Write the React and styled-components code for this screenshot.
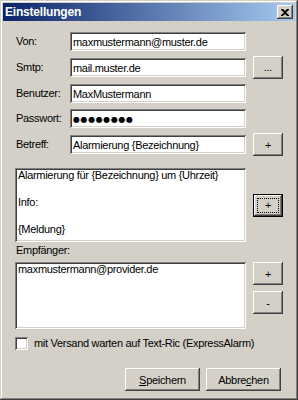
import React from "react";
import styled, { createGlobalStyle, css } from "styled-components";

const GlobalStyle = createGlobalStyle`
  html, body {
    margin: 0;
    padding: 0;
    background: #d4d0c8;
  }
  body {
    font-family: "Liberation Sans", Arial, sans-serif;
    font-size: 11px;
    letter-spacing: -0.3px;
    color: #000;
  }
  * { box-sizing: border-box; }
`;

// win2k bevels
const raised = css`
  box-shadow: inset -1px -1px #404040, inset 1px 1px #ffffff,
    inset -2px -2px #808080, inset 2px 2px #d4d0c8;
`;
const sunken = css`
  box-shadow: inset 1px 1px #808080, inset -1px -1px #ffffff,
    inset 2px 2px #404040, inset -2px -2px #d4d0c8;
`;

const Window = styled.div`
  width: 298px;
  height: 400px;
  padding: 3px;
  background: #d4d0c8;
  display: flex;
  flex-direction: column;
  box-shadow: inset -1px -1px #404040, inset 1px 1px #d4d0c8,
    inset -2px -2px #808080, inset 2px 2px #ffffff;
`;

const TitleBar = styled.div`
  height: 18px;
  display: flex;
  align-items: center;
  justify-content: space-between;
  padding: 0 2px 0 2px;
  background: linear-gradient(to right, #0a246a, #a6caf0);
`;

const Title = styled.span`
  color: #fff;
  font-weight: bold;
  font-size: 12px;
  letter-spacing: -0.2px;
`;

const CloseButton = styled.button`
  width: 16px;
  height: 14px;
  padding: 0;
  border: 0;
  background: #d4d0c8;
  display: flex;
  align-items: center;
  justify-content: center;
  ${raised}
`;

const Body = styled.div`
  padding: 11px 12px 0 12px;
  display: flex;
  flex-direction: column;
`;

const Form = styled.div`
  display: grid;
  grid-template-columns: 55px 176px 37px;
  grid-auto-rows: 19px;
  row-gap: 6.75px;
  align-items: center;
`;

const Label = styled.label`
  padding-left: 1px;
  line-height: 13px;
`;

const Field = styled.input`
  width: 176px;
  height: 19px;
  border: 0;
  outline: none;
  padding: 1px 3px 0 3px;
  background: #fff;
  font: inherit;
  letter-spacing: inherit;
  color: #000;
  ${sunken}
`;

const PasswordField = styled(Field)`
  font-family: "DejaVu Sans", sans-serif;
  font-size: 8px;
  letter-spacing: 0.6px;
  padding-left: 3px;
`;

const Button = styled.button`
  width: ${(p) => p.$w || 30}px;
  height: 23px;
  padding: 0;
  border: 0;
  outline: none;
  background: #d4d0c8;
  font: inherit;
  letter-spacing: inherit;
  color: #000;
  justify-self: end;
  align-self: center;
  position: relative;
  ${raised}
  ${(p) =>
    p.$focused &&
    css`
      box-shadow: inset 0 0 0 1px #000, inset -2px -2px #404040,
        inset 2px 2px #ffffff, inset -3px -3px #808080;
      &::after {
        content: "";
        position: absolute;
        inset: 4px;
        border: 1px dotted #000;
      }
    `}
`;

const AreaRow = styled.div`
  display: flex;
  gap: 7px;
  align-items: flex-start;
  margin-top: ${(p) => p.$top || 0}px;
`;

const Area = styled.textarea`
  width: 231px;
  height: ${(p) => p.$h}px;
  border: 0;
  outline: none;
  resize: none;
  overflow: hidden;
  padding: 1px 3px 0 3px;
  background: #fff;
  font: inherit;
  letter-spacing: inherit;
  line-height: 13.5px;
  color: #000;
  ${sunken}
`;

const SideButtons = styled.div`
  display: flex;
  flex-direction: column;
  gap: 6px;
`;

const GroupLabel = styled.div`
  margin: 2px 0 5px 1px;
  line-height: 13px;
`;

const CheckRow = styled.label`
  display: flex;
  align-items: center;
  gap: 6px;
  margin-top: 8px;
  line-height: 13px;
`;

const CheckBox = styled.span`
  width: 13px;
  height: 13px;
  background: #fff;
  ${sunken}
`;

const Footer = styled.div`
  display: flex;
  justify-content: flex-end;
  gap: 6px;
  margin-top: 18px;
  padding-right: 2px;
`;

const CloseGlyph = () => (
  <svg width="8" height="7" viewBox="0 0 8 7">
    <path d="M0 0h2l2 2 2-2h2v1L5 3.5 8 6v1H6L4 5 2 7H0V6l3-2.5L0 1z" fill="#000" />
  </svg>
);

const rows = [
  { label: "Von:", value: "maxmustermann@muster.de" },
  { label: "Smtp:", value: "mail.muster.de", button: "..." },
  { label: "Benutzer:", value: "MaxMustermann" },
  { label: "Passwort:", value: "●●●●●●●●", password: true },
  { label: "Betreff:", value: "Alarmierung {Bezeichnung}", button: "+" },
];

export default function App() {
  return (
    <>
      <GlobalStyle />
      <Window>
        <TitleBar>
          <Title>Einstellungen</Title>
          <CloseButton>
            <CloseGlyph />
          </CloseButton>
        </TitleBar>
        <Body>
          <Form>
            {rows.map((r) => (
              <React.Fragment key={r.label}>
                <Label>{r.label}</Label>
                {r.password ? (
                  <PasswordField readOnly value={r.value} />
                ) : (
                  <Field readOnly value={r.value} />
                )}
                {r.button ? <Button>{r.button}</Button> : <span />}
              </React.Fragment>
            ))}
          </Form>

          <AreaRow $top={14}>
            <Area
              $h={74}
              readOnly
              value={"Alarmierung für {Bezeichnung} um {Uhrzeit}\n\nInfo:\n\n{Meldung}"}
            />
            <Button $focused>+</Button>
          </AreaRow>

          <GroupLabel>Empfänger:</GroupLabel>
          <AreaRow>
            <Area $h={67} readOnly value="maxmustermann@provider.de" />
            <SideButtons>
              <Button>+</Button>
              <Button>-</Button>
            </SideButtons>
          </AreaRow>

          <CheckRow>
            <CheckBox />
            mit Versand warten auf Text-Ric (ExpressAlarm)
          </CheckRow>

          <Footer>
            <Button $w={75}>
              <u>S</u>peichern
            </Button>
            <Button $w={75}>
              Abbre<u>c</u>hen
            </Button>
          </Footer>
        </Body>
      </Window>
    </>
  );
}
